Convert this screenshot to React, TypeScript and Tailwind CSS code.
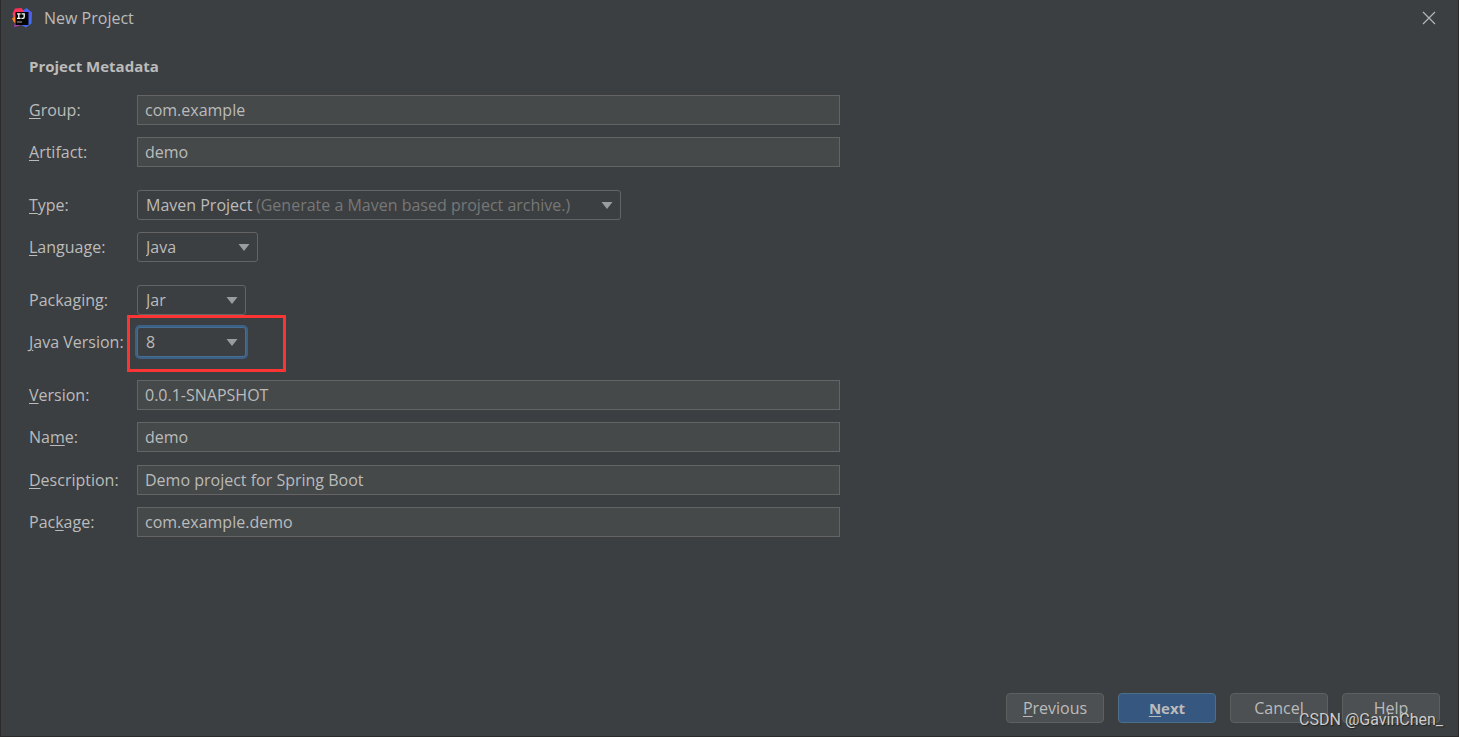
import type { ReactNode } from 'react';

const Key = ({ children }: { children: string }) => (
  <span className="underline decoration-1 underline-offset-2">{children}</span>
);

type RowProps = {
  id: string;
  label: ReactNode;
  className?: string;
  children: ReactNode;
};

const Row = ({ id, label, className = '', children }: RowProps) => (
  <div className={`flex items-center ${className}`}>
    <label htmlFor={id} className="w-[108px] shrink-0 whitespace-nowrap">
      {label}
    </label>
    {children}
  </div>
);

const TextField = ({ id, value }: { id: string; value: string }) => (
  <input
    id={id}
    type="text"
    defaultValue={value}
    className="h-[30px] min-w-0 flex-1 border border-[#646464] bg-[#45494a] px-[7px] outline-none"
  />
);

type ComboProps = {
  id: string;
  options: string[];
  className: string;
  focused?: boolean;
  hint?: string;
  children?: ReactNode;
};

const Combo = ({ id, options, className, focused, hint, children }: ComboProps) => (
  <div className={`relative ${className}`}>
    <select
      id={id}
      className={`block h-[30px] w-full appearance-none rounded-[3px] border bg-[#3c3f41] px-2 outline-none ${
        focused ? 'border-[#466d94] ring-2 ring-[#3d6185]' : 'border-[#646464]'
      }`}
    >
      {options.map((option) => (
        <option key={option}>{option}</option>
      ))}
    </select>
    {hint && (
      <span className="pointer-events-none absolute top-[3px] left-[119px] whitespace-nowrap text-[#777777]">
        {hint}
      </span>
    )}
    <svg
      viewBox="0 0 12 7"
      className="pointer-events-none absolute top-3 right-2 h-[7px] w-3"
      fill="#9a9da0"
    >
      <path d="M0.5 0h11L6 7z" />
    </svg>
    {children}
  </div>
);

const Logo = () => (
  <svg viewBox="0 0 20 20" className="h-5 w-5">
    <defs>
      <linearGradient id="blue" x1="0" y1="0" x2="1" y2="1">
        <stop offset="0" stopColor="#1f7cf0" />
        <stop offset="0.5" stopColor="#5a55f0" />
        <stop offset="1" stopColor="#2f80f5" />
      </linearGradient>
      <linearGradient id="pink" x1="0" y1="0" x2="0" y2="1">
        <stop offset="0" stopColor="#fe2857" />
        <stop offset="0.5" stopColor="#f5476a" />
        <stop offset="1" stopColor="#a03bd0" />
      </linearGradient>
    </defs>
    <path d="M11 2.5 14.5 0 20 4.5 19.5 15.5 14 19.5 9 17z" fill="url(#blue)" />
    <path d="M3 0.5 9.5 0 13 5 8 17.5 2 19 3 15 0.5 5.5z" fill="url(#pink)" />
    <path d="M0 10.5 3 8.5 5 15 2 14.5z" fill="#fc801d" />
    <path d="M3.5 4h13v13h-13z" fill="#050505" />
    <path
      d="M5 5.8h3.6M6.8 5.8v4.6M5 10.4h3.6M9.6 5.8h2.6v3q0 1.6-1.4 1.6H9.4"
      fill="none"
      stroke="#fff"
      strokeWidth="1.3"
    />
    <path d="M5 13.5h5v1H5z" fill="#a8a8a8" />
  </svg>
);

const buttonClass = 'h-[30px] w-[98px] rounded-[4px] border';
const plainButton = 'border-[#5e6060] bg-[#4c5052]';

const App = () => {
  return (
    <div className="flex min-h-screen flex-col border-x border-b border-[#2b2b2b] bg-[#3c3f41] font-['Open_Sans','Noto_Sans',sans-serif] text-base leading-6 text-[#bbbbbb]">
      {/* Title bar */}
      <header className="flex h-9 items-center justify-between pr-[22px] pl-[11px]">
        <div className="flex items-center gap-3">
          <Logo />
          <span>New Project</span>
        </div>
        <button type="button" aria-label="Close">
          <svg viewBox="0 0 14 14" className="h-[14px] w-[14px]" stroke="#b4b6b7" strokeWidth="1.2">
            <path d="M1 1l12 12M13 1L1 13" />
          </svg>
        </button>
      </header>

      <main className="flex-1 px-7 pt-[18px]">
        <h1 className="text-[15px] leading-6 font-bold">Project Metadata</h1>

        <form className="mt-[17px] max-w-[811px]">
          <Row id="group" label={<><Key>G</Key>roup:</>}>
            <TextField id="group" value="com.example" />
          </Row>
          <Row id="artifact" className="mt-3" label={<><Key>A</Key>rtifact:</>}>
            <TextField id="artifact" value="demo" />
          </Row>

          <Row id="type" className="mt-[23px]" label={<><Key>T</Key>ype:</>}>
            <Combo
              id="type"
              className="w-[484px]"
              options={['Maven Project']}
              hint="(Generate a Maven based project archive.)"
            />
          </Row>
          <Row id="language" className="mt-3" label={<><Key>L</Key>anguage:</>}>
            <Combo id="language" className="w-[121px]" options={['Java', 'Kotlin', 'Groovy']} />
          </Row>

          <Row id="packaging" className="mt-[23px]" label={<>Packa<Key>g</Key>ing:</>}>
            <Combo id="packaging" className="w-[109px]" options={['Jar', 'War']} />
          </Row>
          <Row id="java-version" className="mt-3" label={<><Key>J</Key>ava Version:</>}>
            <Combo id="java-version" className="w-[109px]" options={['8', '11', '17']} focused>
              {/* Highlight frame */}
              <div className="pointer-events-none absolute -top-3 -left-[10px] h-[57px] w-[159px] border-[3px] border-[#fb3434]" />
            </Combo>
          </Row>

          <Row id="version" className="mt-[23px]" label={<><Key>V</Key>ersion:</>}>
            <TextField id="version" value="0.0.1-SNAPSHOT" />
          </Row>
          <Row id="name" className="mt-3" label={<>Na<Key>m</Key>e:</>}>
            <TextField id="name" value="demo" />
          </Row>
          <Row id="description" className="mt-[13px]" label={<><Key>D</Key>escription:</>}>
            <TextField id="description" value="Demo project for Spring Boot" />
          </Row>
          <Row id="package" className="mt-3" label={<>Pac<Key>k</Key>age:</>}>
            <TextField id="package" value="com.example.demo" />
          </Row>
        </form>
      </main>

      <footer className="relative flex justify-end gap-[14px] pr-[18px] pb-[13px]">
        <button type="button" className={`${buttonClass} ${plainButton}`}>
          <Key>P</Key>revious
        </button>
        <button type="button" className={`${buttonClass} border-[#4c708c] bg-[#365880] text-[15px] font-bold`}>
          <Key>N</Key>ext
        </button>
        <button type="button" className={`${buttonClass} ${plainButton}`}>Cancel</button>
        <button type="button" className={`${buttonClass} ${plainButton}`}>Help</button>
        <span className="pointer-events-none absolute right-[15px] bottom-1 font-['Roboto',sans-serif] text-base text-[#cccccc] [text-shadow:1px_1px_1px_#222]">
          CSDN @GavinChen_
        </span>
      </footer>
    </div>
  );
};

export default App;
